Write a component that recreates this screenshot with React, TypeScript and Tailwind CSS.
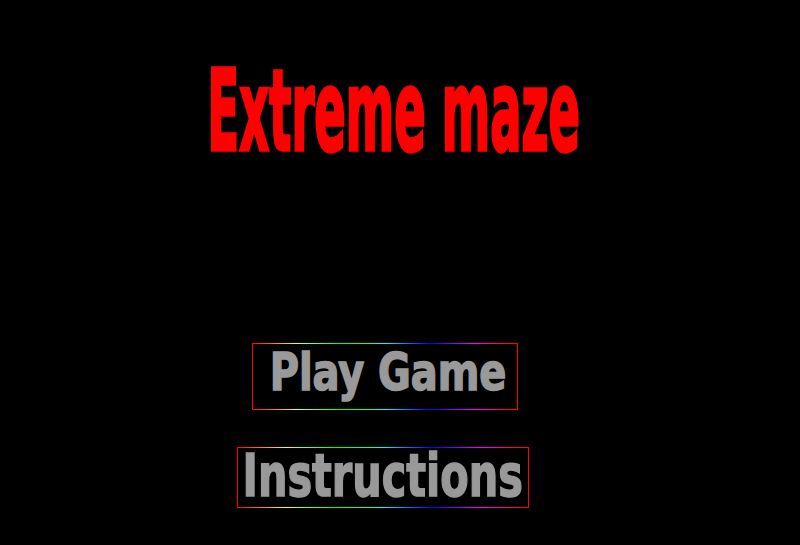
import React from "react";

function RainbowLine() {
  return (
    <div className="h-px w-full shrink-0 bg-[linear-gradient(90deg,#ff0000,#ffff00,#00ff00,#00ffff,#0000ff,#ff00ff,#ff0000)]" />
  );
}

export default function App() {
  return (
    <div className="w-[800px] h-[545px] bg-black overflow-hidden flex flex-col items-center font-['DejaVu_Sans_Condensed','Liberation_Sans',sans-serif] font-bold">
      <h1 className="mt-[52px] ml-[-12px] h-[120px] flex items-center justify-center text-[67px] leading-none text-[#ff0000] whitespace-nowrap [-webkit-text-stroke:2px_#ff0000]">
        <span className="inline-block scale-x-[0.77] scale-y-[1.68]">Extreme maze</span>
      </h1>
      <div className="mt-[171px] ml-[-31px] w-[266px] h-[67px] flex flex-col">
        <RainbowLine />
        <div className="flex-1 border-l border-r border-solid border-[#ff0000] flex items-center justify-center pl-[8px] text-[51px] leading-none text-[#999999] whitespace-nowrap [-webkit-text-stroke:1.5px_#999999]">
          <span className="inline-block scale-x-[0.87] -translate-y-[4px]">Play Game</span>
        </div>
        <RainbowLine />
      </div>
      <div className="mt-[37px] ml-[-35px] w-[292px] h-[61px] flex flex-col">
        <RainbowLine />
        <div className="flex-1 border-l border-r border-solid border-[#ff0000] flex items-center justify-center text-[59px] leading-none text-[#999999] whitespace-nowrap [-webkit-text-stroke:1.5px_#999999]">
          <span className="inline-block scale-x-[0.78] -translate-y-[2px]">Instructions</span>
        </div>
        <RainbowLine />
      </div>
    </div>
  );
}
